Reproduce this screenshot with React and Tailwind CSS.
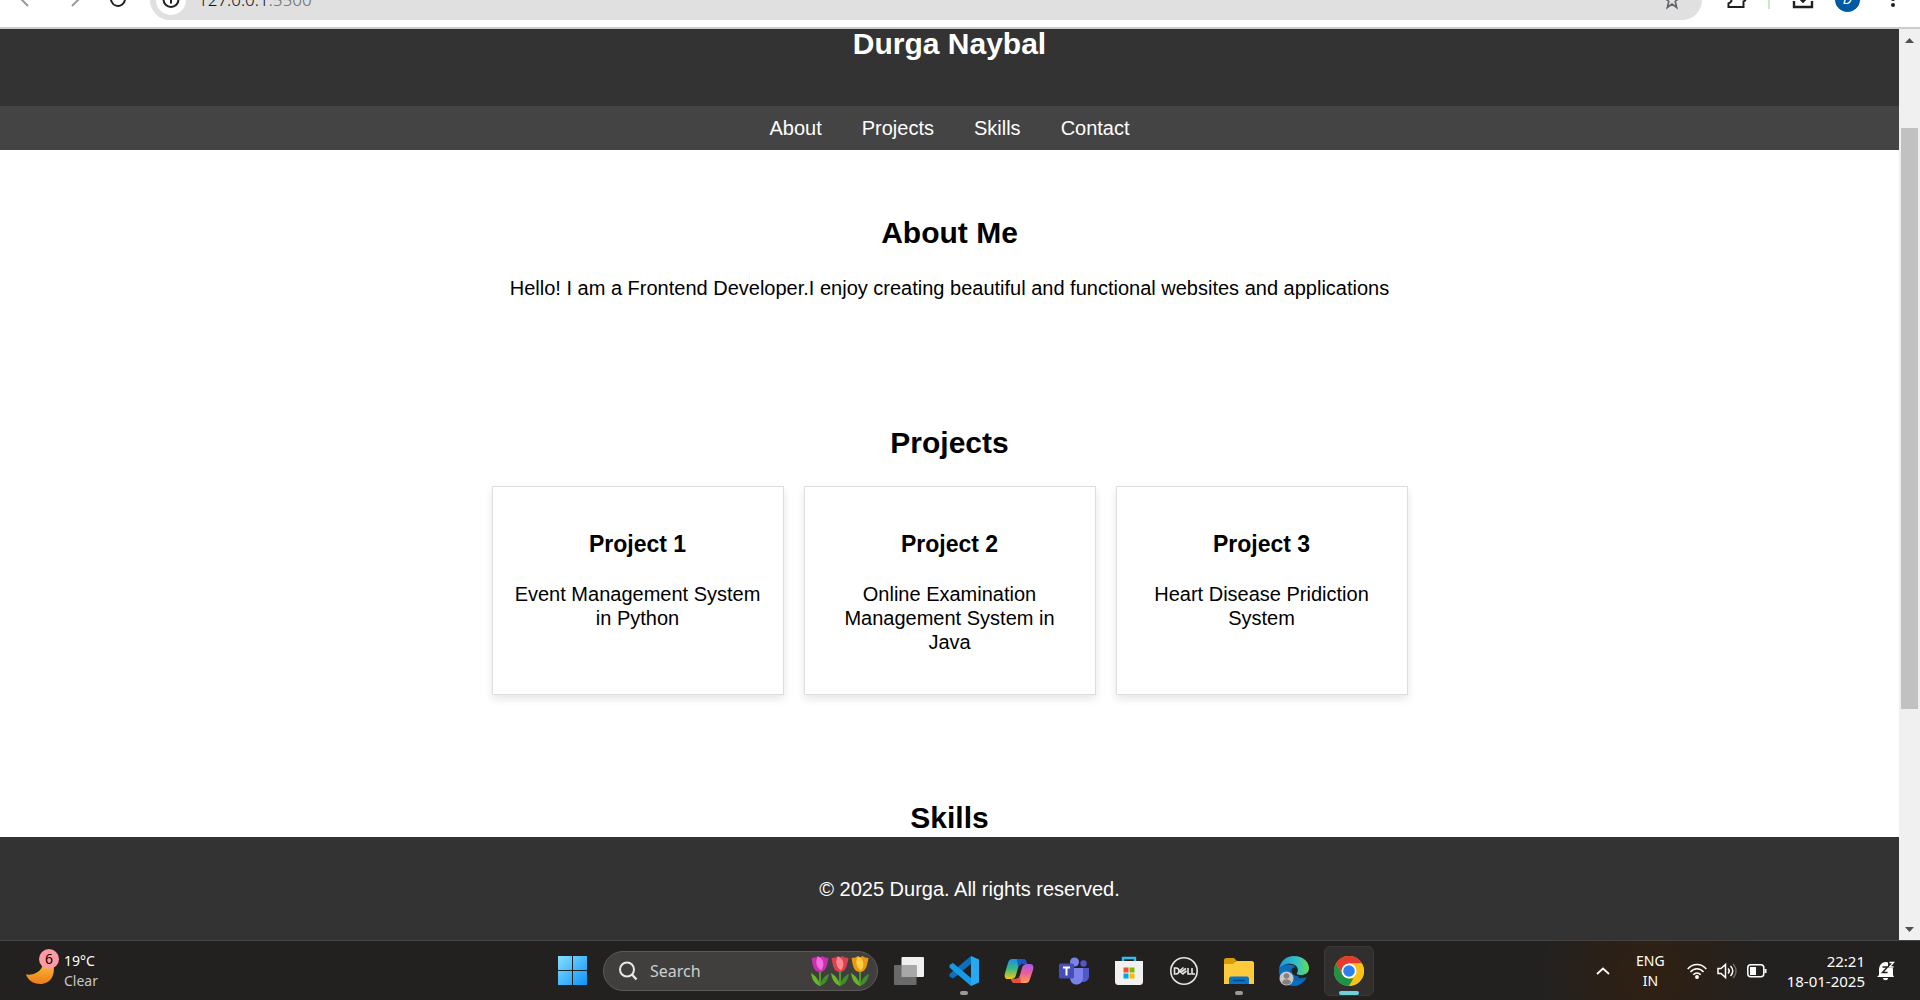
import React from "react";

const projects = [
  { title: "Project 1", text: "Event Management System in Python" },
  { title: "Project 2", text: "Online Examination Management System in Java" },
  { title: "Project 3", text: "Heart Disease Pridiction System" },
];

const links = ["About", "Projects", "Skills", "Contact"];

function BrowserBar() {
  return (
    <div className="flex h-[29px] shrink-0 items-end overflow-hidden border-b-2 border-[#cbcbcb] bg-white pb-[7px] font-['Noto_Sans',sans-serif]">
      <div className="flex h-[42px] w-[150px] items-center pl-4">
        <button aria-label="Back" className="size-5 text-[#9a9a9a]">
          <svg viewBox="0 0 20 20" className="size-5" fill="none" stroke="currentColor" strokeWidth="2"><path d="M12 3l-7 7 7 7" /></svg>
        </button>
        <button aria-label="Forward" className="ml-[30px] size-5 text-[#9a9a9a]">
          <svg viewBox="0 0 20 20" className="size-5" fill="none" stroke="currentColor" strokeWidth="2"><path d="M6 17l7-7-7-7" /></svg>
        </button>
        <button aria-label="Reload" className="ml-[22px] size-5 text-[#1f2024]">
          <svg viewBox="0 0 20 20" className="size-5" fill="none" stroke="currentColor" strokeWidth="2"><path d="M15 5a7 7 0 1 0 2 5M16 1v5h-5" /></svg>
        </button>
      </div>
      <div className="flex h-10 min-w-0 flex-1 items-center rounded-full bg-[#e0e0e0] pr-5 pl-[6px]">
        <span className="flex size-[30px] items-center justify-center rounded-full bg-white">
          <svg viewBox="0 0 20 20" className="size-5" fill="none" stroke="#1f2024" strokeWidth="2"><circle cx="10" cy="9.500" r="7.500" /><path d="M10 8.500v5M10 4.500v2" /></svg>
        </span>
        <span className="ml-3 flex-1 text-[17px] leading-6 font-light text-[#111]">127.0.0.1<span className="text-[#666]">:5500</span></span>
        <svg viewBox="0 0 20 20" className="size-5" fill="none" stroke="#5f6368" strokeWidth="1.600"><path d="M10 2l2 5.500 5.500.300-4.300 3.700 1.500 6L10 14l-4.700 3.500 1.500-6L2.500 7.800 8 7.500z" /></svg>
      </div>
      <div className="flex h-[42px] w-[218px] items-center pl-6">
        <svg viewBox="0 0 22 22" className="size-[22px]" fill="none" stroke="#1f2024" strokeWidth="2"><path d="M2.500 19h15v-5.500c3-1 3-5 0-6V5h-15v4c4 1 4 5 0 6.500z" /></svg>
        <span className="ml-5 h-5 w-[2px] bg-[#c5edb9]" />
        <svg viewBox="0 0 22 22" className="ml-[22px] size-[22px]" fill="none" stroke="#1f2024" strokeWidth="2.400"><path d="M2 13v6h18v-6M11 3v10M7 9.500l4 4 4-4" /></svg>
        <span className="ml-[21px] flex size-[25px] items-center justify-center rounded-full bg-[#0059a3] text-sm text-white italic">D</span>
        <svg viewBox="0 0 6 22" className="ml-[30px] h-[22px] w-[6px]" fill="#1f2024"><circle cx="3" cy="4" r="2" /><circle cx="3" cy="11" r="2" /><circle cx="3" cy="17" r="2" /></svg>
      </div>
    </div>
  );
}

function ScrollBar() {
  return (
    <div className="flex w-[21px] shrink-0 flex-col items-center bg-[#f0f0f0]">
      <svg viewBox="0 0 9 5" className="mt-[9px] h-[5px] w-[9px]" fill="#505050"><path d="M0 5 4.500 0 9 5z" /></svg>
      <div className="mt-[85px] h-[581px] w-[17px] bg-[#c1c1c1]" />
      <svg viewBox="0 0 9 5" className="mt-auto mb-2 h-[5px] w-[9px]" fill="#505050"><path d="M0 0h9L4.500 5z" /></svg>
    </div>
  );
}

function Tulip({ light, dark }) {
  return (
    <svg viewBox="0 0 20 32" className="h-8 w-5">
      <path d="M10 14v17" stroke="#4f9b26" strokeWidth="2" />
      <path d="M10 31C4 29 2 24 1 18c5 3 8 7 9 13z" fill="#69b52f" />
      <path d="M10 31c6-2 8-7 9-12-5 2-8 6-9 12z" fill="#3e8f2c" />
      <path d="M1.500 3l4-.500L8 1l2 1.500L12.500 1 15 2.500l3.500.500c-1 3-1 14-8.500 14S2.500 7 1.500 3z" fill={dark} />
      <path d="M8 1.500c6 2 7 9 3 14C6 12 5 6 8 1.500z" fill={light} />
    </svg>
  );
}

function VSCodeIcon() {
  return (
    <svg viewBox="0 0 30 30" className="size-[30px]">
      <path d="M22 8 4 22.500 0.500 20.500V18L22 0z" fill="#0b71bd" />
      <path d="M22 22 4 7 .5 9v2.500L22 30z" fill="#159be6" />
      <path d="M22 0l8 3.500v23L22 30z" fill="#27a9f2" />
    </svg>
  );
}

function CopilotIcon() {
  return (
    <svg viewBox="0 0 30 28" className="h-7 w-[30px]">
      <defs>
        <linearGradient id="cpA" x1="0" y1="0" x2="0" y2="1"><stop offset="0" stopColor="#1c8df2" /><stop offset=".5" stopColor="#3dbb7a" /><stop offset="1" stopColor="#f5c518" /></linearGradient>
        <linearGradient id="cpB" x1="0" y1="0" x2="0" y2="1"><stop offset="0" stopColor="#a259f0" /><stop offset=".5" stopColor="#ee5f96" /><stop offset="1" stopColor="#ffa24a" /></linearGradient>
      </defs>
      <path d="M8 2h11c2 0 3 1 4 5h-5c-2 0-3 1-4 4l-2 7c-1 3-2 4-5 4H4c-3 0-4-2-3-6L4 6c1-3 2-4 4-4z" fill="url(#cpA)" />
      <path d="M13 2h6c2 0 3 1 4 5h-5c-2 0-3 1-4 3z" fill="#1757c9" />
      <path d="M22 26H11c-2 0-3-1-4-4h4c3 0 4-1 5-4l2-7c1-3 2-4 5-4h3c3 0 4 2 3 6l-3 9c-1 3-2 4-4 4z" fill="url(#cpB)" />
      <path d="M17 26h-6c-2 0-3-1-4-4h4c3 0 4-1 5-3z" fill="#ee4a3a" />
    </svg>
  );
}

function TeamsIcon() {
  return (
    <svg viewBox="0 0 30 28" className="h-7 w-[30px]">
      <circle cx="24.500" cy="6.500" r="3.200" fill="#5059c9" />
      <path d="M20 11h10v8c0 4-3 6-6 6h-4z" fill="#5059c9" />
      <circle cx="15.500" cy="5" r="4.500" fill="#7b83eb" />
      <path d="M11 11h13v9c0 5-3 7.500-6.500 7.500S11 25 11 20z" fill="#7b83eb" />
      <rect x="0" y="6.500" width="15" height="15" rx="1.500" fill="#464eb8" />
      <path d="M4 10.500h7M7.500 10.500v8" stroke="#fff" strokeWidth="2" />
    </svg>
  );
}

function StoreIcon() {
  return (
    <svg viewBox="0 0 30 30" className="size-[30px]">
      <path d="M9 6V2h12v4" fill="none" stroke="#30bdf0" strokeWidth="2.400" />
      <path d="M1 5h28v20c0 3-1 4-4 4H5c-3 0-4-1-4-4z" fill="#f1f1f1" />
      <path d="M9.500 11.500h5v5h-5z" fill="#f25022" /><path d="M15.500 11.500h5v5h-5z" fill="#7fba00" />
      <path d="M9.500 17.500h5v5h-5z" fill="#00a4ef" /><path d="M15.500 17.500h5v5h-5z" fill="#ffb900" />
    </svg>
  );
}

function DellIcon() {
  return (
    <svg viewBox="0 0 30 30" className="size-[30px]" fill="none" stroke="#e6e6e6">
      <circle cx="15" cy="15" r="13.200" strokeWidth="1.600" />
      <path d="M5.500 12v6h1.500a3 3 0 0 0 0-6zM14.500 11.500l-4 3.500 4 3.500M12 16l5-3.500M13.500 18l4-3M19 12v6h3M23 12v6h3" strokeWidth="1.600" />
    </svg>
  );
}

function FolderIcon() {
  return (
    <svg viewBox="0 0 30 28" className="h-7 w-[30px]">
      <path d="M0 3c0-1 1-2 2-2h8l3 3h-2v5H0z" fill="#dc9a05" />
      <path d="M0 7h9l3-3h16c1 0 2 1 2 2v21H0z" fill="#fdca3b" />
      <path d="M5 27v-5c0-2 1-2.500 3-2.500h14c2 0 3 .500 3 2.500v5z" fill="#0a74cc" />
      <path d="M9 23.500h12" stroke="#064a86" strokeWidth="1.500" />
    </svg>
  );
}

function EdgeIcon() {
  return (
    <svg viewBox="0 0 30 30" className="size-[30px]">
      <defs>
        <linearGradient id="edgeA" x1="0" y1=".5" x2="1" y2=".5"><stop offset="0" stopColor="#1497dc" /><stop offset=".6" stopColor="#35c1c5" /><stop offset="1" stopColor="#65dc55" /></linearGradient>
      </defs>
      <path d="M0 15a15 15 0 0 1 15-6l5 13 8-.500A15 15 0 0 1 0 15z" fill="#0d62ab" />
      <path d="M0 14c3-6 10-7 15-3-4 0-6 5-3 10 3 4 10 5 15 1-3 5-7 8-12 8C5 30 0 22 0 14z" fill="#0b6fc0" />
      <path d="M0 14C1 5 7 0 15 0c9 0 15 6 15 12 0 5-4 7-8 7-3 0-5-1-4-3 2-3 0-7-5-8C8 7 2 9 0 14z" fill="url(#edgeA)" />
      <path d="M13.500 12c-2 3-.500 7 4.500 8 3 1 6 1 9-.500-2 1-5 .500-7 0-3-.500-2.500-2-1.500-3.500 1-2-2-5-5-4z" fill="#222120" />
      <circle cx="7.500" cy="22.500" r="7" fill="#c9c7c5" />
      <circle cx="7.500" cy="20" r="2.800" fill="#85817e" /><path d="M3 27c0-5 9-5 9 0a7 7 0 0 1-9 0z" fill="#85817e" />
    </svg>
  );
}

function ChromeIcon() {
  return (
    <svg viewBox="0 0 30 30" className="size-[30px]">
      <circle cx="15" cy="15" r="15" fill="#fbc116" />
      <path d="M2 7.500a15 15 0 0 1 26 0H15L8.500 18.700z" fill="#e33b2e" />
      <path d="M2 7.500 8.500 18.800 15 22.500h6.500L15 30A15 15 0 0 1 2 7.500z" fill="#1f9246" />
      <path d="M21.500 18.700 15 30a15 15 0 0 0 13-22.500H15z" fill="#fbc116" />
      <circle cx="15" cy="15" r="7.500" fill="#fff" /><circle cx="15" cy="15" r="5.800" fill="#2d7ff0" />
    </svg>
  );
}

function TaskViewIcon() {
  return (
    <svg viewBox="0 0 30 28" className="h-7 w-[30px]">
      <rect x="7.500" y="0" width="22.500" height="20" rx="1" fill="#f0f0f0" />
      <rect x="0" y="8" width="22.500" height="20" rx="1" fill="#6a6a6a" />
      <path d="M7.500 8h15v12h-15z" fill="#a8a8a8" />
    </svg>
  );
}

const apps = [
  { name: "Task view", Icon: TaskViewIcon },
  { name: "Visual Studio Code", Icon: VSCodeIcon, open: true },
  { name: "Copilot", Icon: CopilotIcon },
  { name: "Teams", Icon: TeamsIcon },
  { name: "Store", Icon: StoreIcon },
  { name: "Dell", Icon: DellIcon },
  { name: "File Explorer", Icon: FolderIcon, open: true },
  { name: "Edge", Icon: EdgeIcon },
  { name: "Chrome", Icon: ChromeIcon, active: true },
];

function AppButton({ name, Icon, open, active }) {
  return (
    <button
      aria-label={name}
      className={
        active
          ? "relative flex size-[50px] items-center justify-center rounded-md border border-[#3a3938] bg-[#302f2e]"
          : "relative flex size-[50px] items-center justify-center"
      }
    >
      <Icon />
      {open && <span className="absolute bottom-[1px] h-1 w-2 rounded-full bg-[#9b9a99]" />}
      {active && <span className="absolute bottom-0 h-1 w-5 rounded-full bg-[#6fd0dc]" />}
    </button>
  );
}

function TaskBar() {
  return (
    <div className="grid h-[60px] shrink-0 grid-cols-[1fr_auto_1fr] items-center border-t border-[#454443] bg-[#222120] bg-[radial-gradient(circle_at_86%_50%,#312012_0%,#222120_7%)] font-['Noto_Sans',sans-serif] text-white">
      <div className="flex items-center pl-[26px]">
        <div className="relative h-9 w-[34px]">
          <svg viewBox="0 0 34 36" className="h-9 w-[34px]">
            <defs><linearGradient id="moon" x1="0" y1="0" x2="0" y2="1"><stop offset="0" stopColor="#f8bd35" /><stop offset="1" stopColor="#f07a1a" /></linearGradient></defs>
            <path d="M0 21.500c8 1 16-3 17-11h10c3 11-2 20.500-13 20.500-7 0-12-4-14-9.500z" fill="url(#moon)" />
          </svg>
          <span className="absolute -top-1 right-[1px] flex size-5 items-center justify-center rounded-full bg-[#ff99a4] text-[14px] leading-5 text-black">6</span>
        </div>
        <div className="ml-1 text-[14px] leading-5">
          <p>19°C</p>
          <p className="text-[#c8c7c6]">Clear</p>
        </div>
      </div>
      <div className="flex items-center pl-3">
        <button aria-label="Start" className="mr-4 size-[29px]">
          <svg viewBox="0 0 29 29" className="size-[29px]">
            <defs><linearGradient id="win" x1="0" y1="0" x2="1" y2="1"><stop offset="0" stopColor="#85dfff" /><stop offset="1" stopColor="#0c93f8" /></linearGradient></defs>
            <path d="M0 0h14v14H0zM15 0h14v14H15zM0 15h14v14H0zM15 15h14v14H15z" fill="url(#win)" />
          </svg>
        </button>
        <label className="mr-[6px] flex h-10 w-[275px] items-center rounded-full border border-[#5d5b5a] bg-[#403f3e] pr-[7px] pl-[14px]">
          <svg viewBox="0 0 20 20" className="size-5 shrink-0" fill="none" stroke="#e8e8e8" strokeWidth="2"><circle cx="9" cy="8.500" r="7" /><path d="M14 13.500l4.500 5" strokeWidth="2.400" /></svg>
          <input aria-label="Search" placeholder="Search" className="ml-3 w-full min-w-0 bg-transparent text-base text-white outline-none placeholder:text-[#cfcecd]" />
          <span className="flex shrink-0">
            <Tulip light="#f46ce0" dark="#c92fae" /><Tulip light="#ff8a8c" dark="#dd3f52" /><Tulip light="#ffcb45" dark="#e79a12" />
          </span>
        </label>
        <div className="flex gap-[5px]">
          {apps.map((app) => <AppButton key={app.name} {...app} />)}
        </div>
      </div>
      <div className="flex items-center justify-end pr-[25px]">
        <svg viewBox="0 0 14 8" className="h-2 w-[14px]" fill="none" stroke="#fff" strokeWidth="1.800"><path d="M1 7l6-5.500L13 7" /></svg>
        <div className="ml-[26px] text-center text-[14px] leading-5"><p>ENG</p><p>IN</p></div>
        <svg viewBox="0 0 20 16" className="ml-[22px] h-4 w-5" fill="none" stroke="#fff" strokeWidth="1.500"><path d="M.7 6c5-6 13.600-6 18.600 0M3.500 9c3.500-4.500 9.500-4.500 13 0M6.300 11.800c2-2.500 5.400-2.500 7.400 0" /><circle cx="10" cy="14" r="1.200" fill="#fff" /></svg>
        <svg viewBox="0 0 20 18" className="ml-[10px] h-[18px] w-5" fill="none" stroke="#fff" strokeWidth="1.500"><path d="M1 6.500h3L8.500 2.500v13L4 11.500H1zM11 6.500c1.500 1.500 1.500 3.500 0 5M13.500 4c3 3 3 7 0 10" /><path d="M16 2c4 4 4 10 0 14" stroke="#666" /></svg>
        <svg viewBox="0 0 20 14" className="ml-[10px] h-[14px] w-5" fill="none" stroke="#fff" strokeWidth="1.500"><rect x=".8" y=".8" width="16" height="12" rx="3" /><path d="M3 3h6v8H3z" fill="#fff" stroke="none" /><path d="M18.500 5v4" strokeWidth="2" /></svg>
        <div className="ml-5 text-right text-[15px] leading-5"><p>22:21</p><p>18-01-2025</p></div>
        <svg viewBox="0 0 18 20" className="ml-3 h-5 w-[18px]"><path d="M2 14V9c0-5 3-8 7-8 3 0 7 3 7 8v5l1 2H0zM6 17h5c0 3-5 3-5 0z" fill="#fff" /><path d="M5.500 6h5l-5 5.500h5" fill="none" stroke="#222120" strokeWidth="1.500" /><path d="M11 1h6v6h-6z" fill="#222120" /><path d="M12.500 1.500h4l-4 4.500h4" fill="none" stroke="#fff" strokeWidth="1.300" /></svg>
      </div>
    </div>
  );
}

function Heading({ children }) {
  return <h2 className="text-[30px] leading-[34px] font-bold">{children}</h2>;
}

export default function App() {
  return (
    <div className="flex h-screen flex-col overflow-hidden bg-white font-['Liberation_Sans',Arial,sans-serif] text-xl leading-6 text-black">
      <BrowserBar />
      <div className="flex min-h-0 flex-1">
        <div className="flex min-w-0 flex-1 flex-col text-center">
          <header className="bg-[#333] pb-[46px] text-white">
            <h1 className="-mt-[2px] text-[30px] leading-[33px] font-bold">Durga Naybal</h1>
          </header>
          <nav className="flex justify-center gap-10 bg-[#444] py-[10px] text-white">
            {links.map((l) => <a key={l} href={"#" + l.toLowerCase()}>{l}</a>)}
          </nav>
          <main className="min-h-0 flex-1 overflow-hidden">
            <section id="about" className="px-5 pt-[66px]">
              <Heading>About Me</Heading>
              <p className="mt-[26px]">Hello! I am a Frontend Developer.I enjoy creating beautiful and functional websites and applications</p>
            </section>
            <section id="projects" className="px-5 pt-[126px]">
              <Heading>Projects</Heading>
              <div className="mt-[26px] flex justify-center gap-5">
                {projects.map((p) => (
                  <article key={p.title} className="w-[292px] border border-[#ddd] px-5 pt-[43px] pb-10 shadow-[0_4px_8px_rgba(0,0,0,0.1)]">
                    <h3 className="text-[23px] leading-7 font-bold">{p.title}</h3>
                    <p className="mt-6">{p.text}</p>
                  </article>
                ))}
              </div>
            </section>
            <section id="skills" className="px-5 pt-[106px]">
              <Heading>Skills</Heading>
            </section>
          </main>
          <footer className="bg-[#333] pt-10 pb-[39px] pl-10 text-white">
            <p>© 2025 Durga. All rights reserved.</p>
          </footer>
        </div>
        <ScrollBar />
      </div>
      <TaskBar />
    </div>
  );
}
